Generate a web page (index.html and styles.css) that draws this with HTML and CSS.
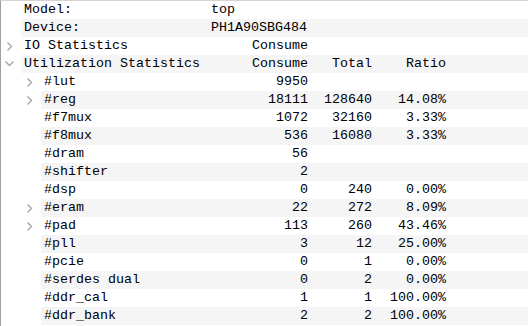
FILE: index.html
```html
<!DOCTYPE html>
<html>
<head>
<meta charset="utf-8">
<link rel="stylesheet" href="styles.css">
</head>
<body>
<div class="tree">
  <div class="row">
    <div class="ind l0"></div>
    <div class="cells c0"><span class="name">Model:</span><span class="val">top</span><span></span><span></span></div>
  </div>
  <div class="row alt">
    <div class="ind l0"></div>
    <div class="cells c0"><span class="name">Device:</span><span class="val">PH1A90SBG484</span><span></span><span></span></div>
  </div>
  <div class="row">
    <div class="ind l0"><svg class="chev" viewBox="0 0 10 18" width="10" height="18"><path d="M3.5 5.5 L7.5 9.5 L3.5 13.5"/></svg></div>
    <div class="cells c0"><span class="name">IO Statistics</span><span class="num">Consume</span><span></span><span></span></div>
  </div>
  <div class="row alt">
    <div class="ind l0"><svg class="chev" viewBox="0 0 10 18" width="10" height="18"><path d="M1.5 6.5 L5.5 10.5 L9.5 6.5"/></svg></div>
    <div class="cells c0"><span class="name">Utilization Statistics</span><span class="num">Consume</span><span class="num">Total</span><span class="num">Ratio</span></div>
  </div>
  <div class="row">
    <div class="ind l1"><svg class="chev" viewBox="0 0 10 18" width="10" height="18"><path d="M3.5 5.5 L7.5 9.5 L3.5 13.5"/></svg></div>
    <div class="cells c1"><span class="name">#lut</span><span class="num">9950</span><span></span><span></span></div>
  </div>
  <div class="row alt">
    <div class="ind l1"><svg class="chev" viewBox="0 0 10 18" width="10" height="18"><path d="M3.5 5.5 L7.5 9.5 L3.5 13.5"/></svg></div>
    <div class="cells c1"><span class="name">#reg</span><span class="num">18111</span><span class="num">128640</span><span class="num">14.08%</span></div>
  </div>
  <div class="row">
    <div class="ind l1"></div>
    <div class="cells c1"><span class="name">#f7mux</span><span class="num">1072</span><span class="num">32160</span><span class="num">3.33%</span></div>
  </div>
  <div class="row alt">
    <div class="ind l1"></div>
    <div class="cells c1"><span class="name">#f8mux</span><span class="num">536</span><span class="num">16080</span><span class="num">3.33%</span></div>
  </div>
  <div class="row">
    <div class="ind l1"></div>
    <div class="cells c1"><span class="name">#dram</span><span class="num">56</span><span></span><span></span></div>
  </div>
  <div class="row alt">
    <div class="ind l1"></div>
    <div class="cells c1"><span class="name">#shifter</span><span class="num">2</span><span></span><span></span></div>
  </div>
  <div class="row">
    <div class="ind l1"></div>
    <div class="cells c1"><span class="name">#dsp</span><span class="num">0</span><span class="num">240</span><span class="num">0.00%</span></div>
  </div>
  <div class="row alt">
    <div class="ind l1"><svg class="chev" viewBox="0 0 10 18" width="10" height="18"><path d="M3.5 5.5 L7.5 9.5 L3.5 13.5"/></svg></div>
    <div class="cells c1"><span class="name">#eram</span><span class="num">22</span><span class="num">272</span><span class="num">8.09%</span></div>
  </div>
  <div class="row">
    <div class="ind l1"><svg class="chev" viewBox="0 0 10 18" width="10" height="18"><path d="M3.5 5.5 L7.5 9.5 L3.5 13.5"/></svg></div>
    <div class="cells c1"><span class="name">#pad</span><span class="num">113</span><span class="num">260</span><span class="num">43.46%</span></div>
  </div>
  <div class="row alt">
    <div class="ind l1"></div>
    <div class="cells c1"><span class="name">#pll</span><span class="num">3</span><span class="num">12</span><span class="num">25.00%</span></div>
  </div>
  <div class="row">
    <div class="ind l1"></div>
    <div class="cells c1"><span class="name">#pcie</span><span class="num">0</span><span class="num">1</span><span class="num">0.00%</span></div>
  </div>
  <div class="row alt">
    <div class="ind l1"></div>
    <div class="cells c1"><span class="name">#serdes dual</span><span class="num">0</span><span class="num">2</span><span class="num">0.00%</span></div>
  </div>
  <div class="row">
    <div class="ind l1"></div>
    <div class="cells c1"><span class="name">#ddr_cal</span><span class="num">1</span><span class="num">1</span><span class="num">100.00%</span></div>
  </div>
  <div class="row alt">
    <div class="ind l1"></div>
    <div class="cells c1"><span class="name">#ddr_bank</span><span class="num">2</span><span class="num">2</span><span class="num">100.00%</span></div>
  </div>
</div>
</body>
</html>
```
FILE: styles.css
```css
html, body {
  margin: 0;
  padding: 0;
  background: #ffffff;
}
body {
  width: 528px;
  height: 326px;
  overflow: hidden;
  font-family: "Liberation Mono", "Courier New", monospace;
  font-size: 13.33px;
  color: #000000;
}
.tree {
  border-top: 1px solid #d4d4d4;
  border-left: 1px solid #a0a0a0;
  height: 325px;
}
.row {
  display: flex;
  height: 18px;
  line-height: 18px;
}
.ind {
  flex: none;
  display: flex;
  justify-content: flex-end;
  align-items: center;
  padding-right: 7px;
  box-sizing: border-box;
}
.ind.l0 { width: 20px; }
.ind.l1 { width: 40px; }
.chev {
  display: block;
  fill: none;
  stroke: #a6a6a6;
  stroke-width: 1.4;
}
.cells {
  flex: 1;
  display: grid;
  white-space: pre;
}
.c0 { grid-template-columns: 187px 104px 64px 74px; }
.c1 { grid-template-columns: 167px 104px 64px 74px; }
.alt .cells { background: #f5f5f5; }
.name { padding-left: 3px; }
.val { padding-left: 3px; }
.num { text-align: right; padding-right: 4px; }
```
